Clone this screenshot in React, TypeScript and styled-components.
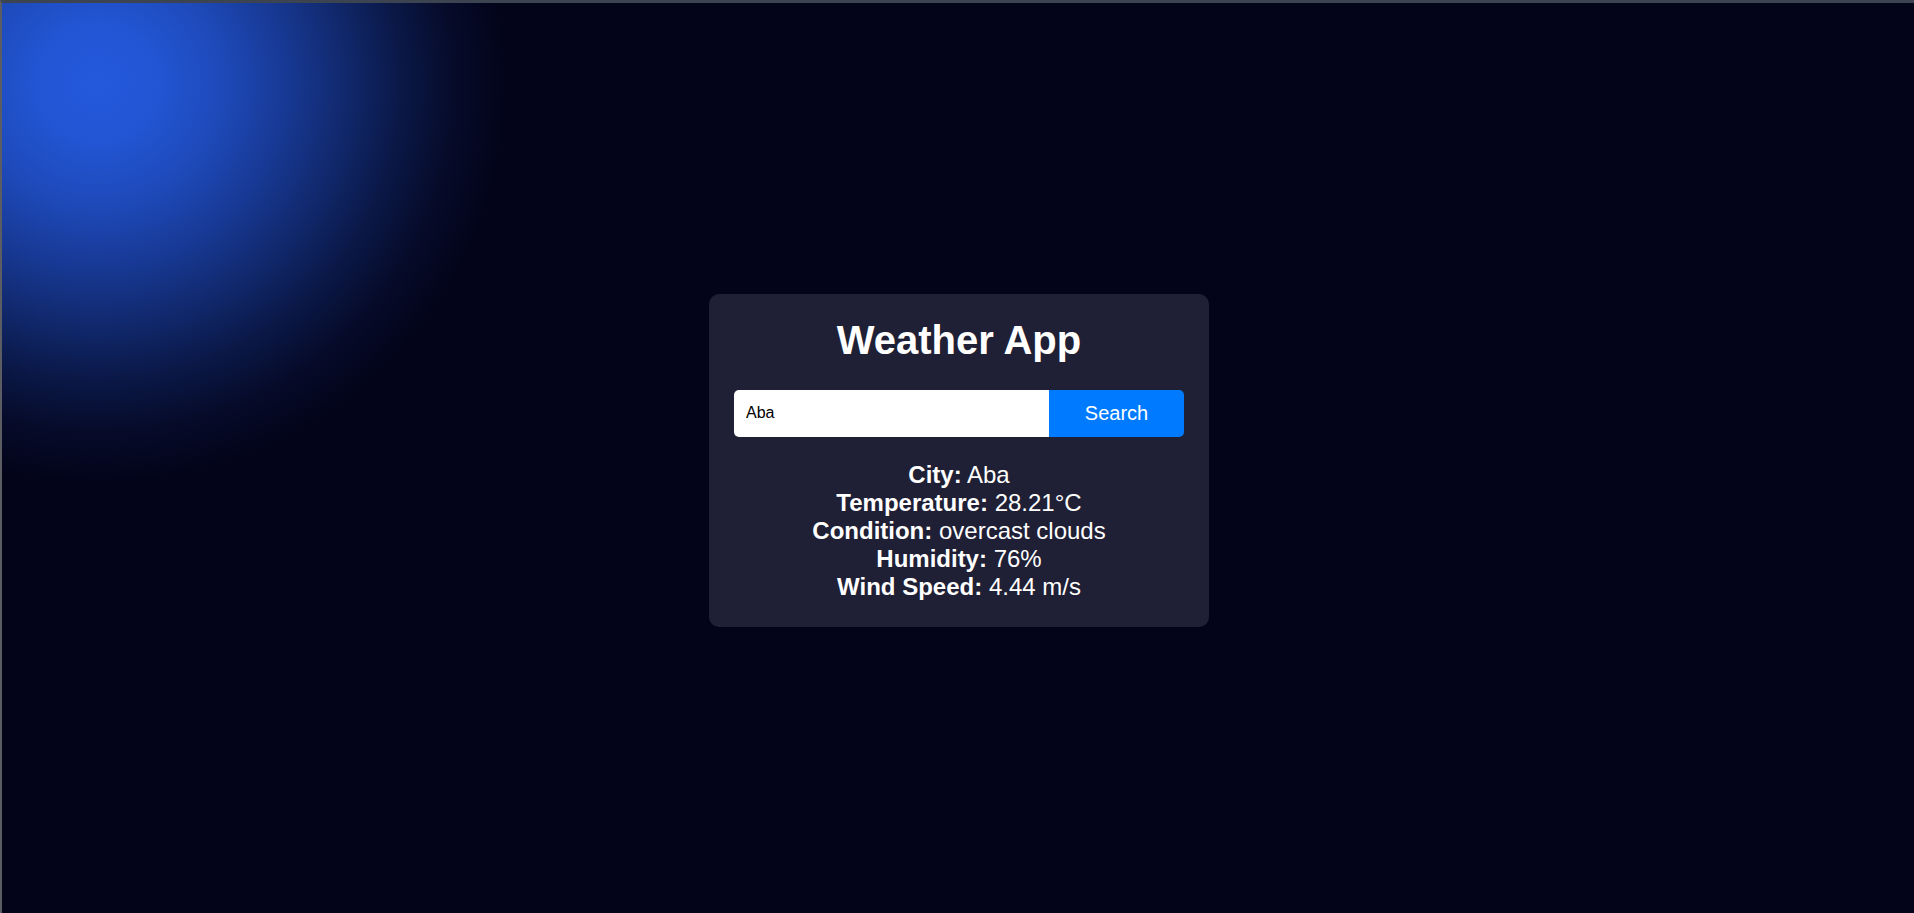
import React from "react";
import styled, { createGlobalStyle } from "styled-components";

const GlobalStyle = createGlobalStyle`
  html, body {
    margin: 0;
    padding: 0;
    height: 100%;
    background: #03041a;
  }
  body {
    font-family: "Liberation Sans", Arial, Helvetica, sans-serif;
  }
  #root {
    height: 100%;
  }
  * {
    box-sizing: border-box;
  }
`;

const Page = styled.div`
  height: 100vh;
  border-top: 3px solid #3c4452;
  border-left: 2px solid #5b5d62;
  display: flex;
  align-items: center;
  justify-content: center;
  padding-top: 4px;
  padding-left: 2px;
  background:
    radial-gradient(
      ellipse 410px 400px at 95px 80px,
      rgb(36, 89, 221) 0%,
      rgb(34, 85, 211) 15%,
      rgb(30, 74, 186) 30%,
      rgb(24, 58, 151) 45%,
      rgb(17, 41, 110) 60%,
      rgb(10, 23, 69) 75%,
      rgb(6, 11, 42) 87%,
      rgb(3, 4, 26) 100%
    ),
    #03041a;
`;

const Card = styled.main`
  width: 500px;
  padding: 24px 25px 26px;
  border-radius: 10px;
  background: #1f2035;
  color: #ffffff;
  text-align: center;
`;

const Title = styled.h1`
  margin: 0 0 27px;
  font-size: 40px;
  font-weight: 700;
  line-height: normal;
`;

const SearchRow = styled.form`
  display: flex;
  height: 47px;
  margin: 0 0 24px;
`;

const CityInput = styled.input`
  flex: 1;
  min-width: 0;
  height: 100%;
  padding: 0 12px;
  border: none;
  outline: none;
  border-radius: 5px 0 0 5px;
  background: #ffffff;
  color: #000000;
  font-family: "Liberation Sans", Arial, sans-serif;
  font-size: 16px;
`;

const SearchButton = styled.button`
  width: 135px;
  height: 100%;
  border: none;
  border-radius: 0 5px 5px 0;
  background: #007bff;
  color: #ffffff;
  font-family: "Liberation Sans", Arial, sans-serif;
  font-size: 20px;
  cursor: pointer;
`;

const Info = styled.div`
  display: flex;
  flex-direction: column;
`;

const InfoLine = styled.div`
  font-size: 24px;
  line-height: normal;
  white-space: nowrap;
`;

const Label = styled.strong`
  font-weight: 700;
`;

const rows: [string, string][] = [
  ["City:", "Aba"],
  ["Temperature:", "28.21°C"],
  ["Condition:", "overcast clouds"],
  ["Humidity:", "76%"],
  ["Wind Speed:", "4.44 m/s"],
];

export default function App() {
  return (
    <>
      <GlobalStyle />
      <Page>
        <Card>
          <Title>Weather App</Title>
          <SearchRow onSubmit={(e) => e.preventDefault()}>
            <CityInput type="text" defaultValue="Aba" />
            <SearchButton type="submit">Search</SearchButton>
          </SearchRow>
          <Info>
            {rows.map(([label, value]) => (
              <InfoLine key={label}>
                <Label>{label}</Label> {value}
              </InfoLine>
            ))}
          </Info>
        </Card>
      </Page>
    </>
  );
}
